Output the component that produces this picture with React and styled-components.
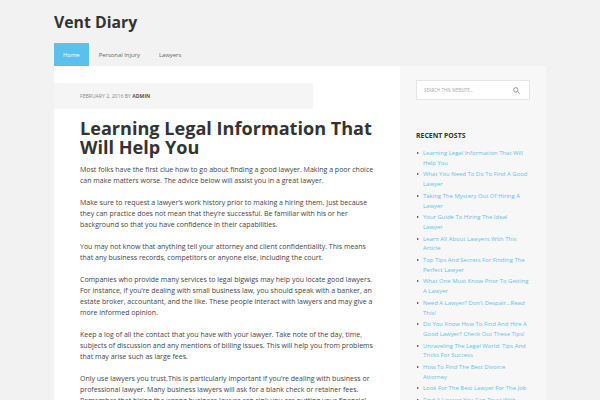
import React from 'react';
import styled, { createGlobalStyle } from 'styled-components';

const GlobalStyle = createGlobalStyle`
  body {
    margin: 0;
    background: #f2f2f2;
    font-family: "Open Sans", "Liberation Sans", sans-serif;
    color: #333;
  }
`;

// line breaks follow the reference where the font metrics differ
const recentPosts = [
  'Learning Legal Information That Will Help You',
  'What You Need To Do To Find A Good Lawyer',
  'Taking The Mystery Out Of Hiring A Lawyer',
  'Your Guide To Hiring The Ideal\nLawyer',
  'Learn All About Lawyers With This Article',
  'Top Tips And Secrets For Finding The Perfect Lawyer',
  'What One Must Know Prior To Getting A Lawyer',
  'Need A Lawyer? Don’t Despair…Read This!',
  'Do You Know How To Find And Hire A Good Lawyer? Check Out These Tips!',
  'Unraveling The Legal World: Tips And Tricks For Success',
  'How To Find The Best Divorce Attorney',
  'Look For The Best Lawyer For The Job',
  'Find A Lawyer You Can Trust With These Tips',
];

const paragraphs = [
  'Most folks have the first clue how to go about finding a good lawyer. Making a poor choice can make matters worse. The advice below will assist you in a great lawyer.',
  'Make sure to request a lawyer’s work history prior to making a hiring them. Just because they can practice does not mean that they’re successful. Be familiar with his or her background so that you have confidence in their capabilities.',
  'You may not know that anything tell your attorney and client confidentiality. This means that any business records, competitors or anyone else, including the court.',
  'Companies who provide many services to legal bigwigs may help you locate good lawyers. For instance, if you’re dealing with small business law, you should speak with a banker, an estate broker, accountant, and the like. These people interact with lawyers and may give a more informed opinion.',
  'Keep a log of all the contact that you have with your lawyer. Take note of the day, time, subjects of discussion and any mentions of billing issues. This will help you from problems that may arise such as large fees.',
  'Only use lawyers you trust.This is particularly important if you’re dealing with business or professional lawyer. Many business lawyers will ask for a blank check or retainer fees. Remember that hiring the wrong business lawyer can sink you are putting your financial future at risk.',
];

const navItems = ['Home', 'Personal Injury', 'Lawyers'];

const App = () => {
  return (
    <>
      <GlobalStyle />
      <Wrap>
        <Header>
          <SiteTitle>Vent Diary</SiteTitle>
        </Header>
        <Nav>
          {navItems.map((item, i) => (
            <NavLink key={item} active={i === 0}>{item}</NavLink>
          ))}
        </Nav>
        <Main>
          <Content>
            <Meta>
              February 2, 2016 by <strong>admin</strong>
            </Meta>
            <Article>
              <Title>Learning Legal Information That Will Help You</Title>
              {paragraphs.map((p, i) => (
                <Para key={i}>{p}</Para>
              ))}
            </Article>
          </Content>
          <Sidebar>
            <SearchBox>
              <SearchText>Search this website…</SearchText>
              <svg width="7" height="7" viewBox="0 0 16 16" fill="none" stroke="#888" strokeWidth="2">
                <circle cx="6.5" cy="6.5" r="5" />
                <path d="M10.5 10.5 L15 15" />
              </svg>
            </SearchBox>
            <WidgetTitle>Recent Posts</WidgetTitle>
            <PostList>
              {recentPosts.map((post) => (
                <PostItem key={post}>
                  <Bullet />
                  <PostLink>{post}</PostLink>
                </PostItem>
              ))}
            </PostList>
          </Sidebar>
        </Main>
      </Wrap>
    </>
  );
};

const Wrap = styled.div`
  width: 492px;
  margin: 0 auto;
  height: 400px;
  overflow: hidden;
`;

const Header = styled.header`
  height: 43px;
  display: flex;
  align-items: center;
`;

const SiteTitle = styled.h1`
  margin: 0;
  font-size: 15.8px;
  font-weight: 700;
  color: #333;
  line-height: 1;
  padding-top: 2px;
`;

const Nav = styled.nav`
  height: 23px;
  display: flex;
  align-items: stretch;
`;

const NavLink = styled.a`
  display: flex;
  align-items: center;
  padding: 0 9px;
  margin-right: 1px;
  font-size: 5.9px;
  color: ${(p) => (p.active ? '#fff' : '#666')};
  background: ${(p) => (p.active ? '#5bc0eb' : 'transparent')};
`;

const Main = styled.div`
  display: flex;
  align-items: stretch;
`;

const Content = styled.main`
  width: 346px;
  background: #fff;
  padding-top: 17px;
  min-height: 400px;
`;

const Meta = styled.div`
  width: 233px;
  height: 26px;
  padding-left: 26px;
  background: #f5f5f5;
  display: flex;
  align-items: center;
  font-size: 5.1px;
  text-transform: uppercase;
  color: #888;

  strong {
    color: #555;
    margin-left: 1.5px;
  }
`;

const Article = styled.article`
  padding: 10px 26px 0 26px;
`;

const Title = styled.h2`
  margin: 0 0 8px;
  font-size: 18.1px;
  line-height: 18.5px;
  font-weight: 700;
  color: #333;
`;

const Para = styled.p`
  margin: 0 0 11px;
  font-size: 7px;
  line-height: 11px;
  color: #444;
`;

const Sidebar = styled.aside`
  width: 114px;
  background: #f7f7f7;
  padding: 14px 16px;
`;

const SearchBox = styled.div`
  height: 18px;
  background: #fff;
  border: 1px solid #e6e6e6;
  display: flex;
  align-items: center;
  justify-content: space-between;
  padding: 0 9px 0 7px;
`;

const SearchText = styled.span`
  font-size: 4.4px;
  text-transform: uppercase;
  color: #aaa;
`;

const WidgetTitle = styled.h4`
  margin: 31px 0 9px;
  font-size: 6.9px;
  font-weight: 700;
  text-transform: uppercase;
  color: #333;
`;

const PostList = styled.ul`
  list-style: none;
  margin: 0;
  padding: 0;
`;

const PostItem = styled.li`
  display: flex;
  align-items: flex-start;
  margin-bottom: 2px;
`;

const Bullet = styled.span`
  flex: none;
  width: 0;
  height: 0;
  margin: 3px 4px 0 1px;
  border-top: 1.6px solid transparent;
  border-bottom: 1.6px solid transparent;
  border-left: 2px solid #333;
`;

const PostLink = styled.a`
  font-size: 5.95px;
  line-height: 9.7px;
  white-space: pre-line;
  color: #62c2e8;
`;

export default App;
